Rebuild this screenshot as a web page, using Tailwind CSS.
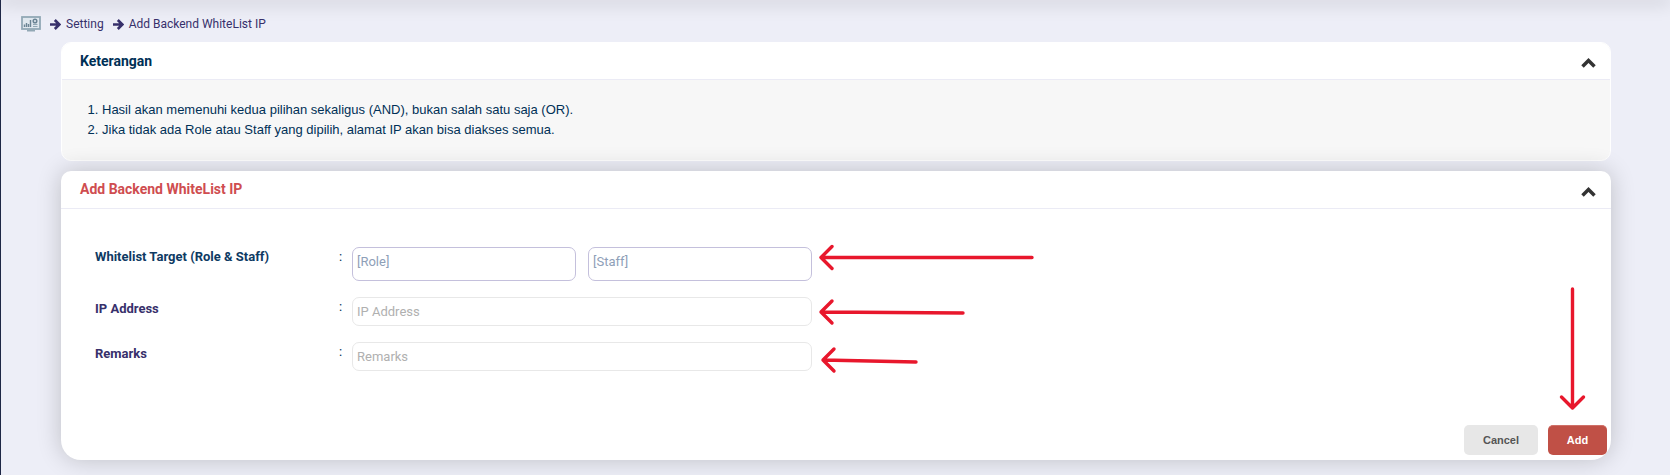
<!DOCTYPE html>
<html lang="id">
<head>
    <meta charset="UTF-8">
    <meta name="viewport" content="width=device-width, initial-scale=1.0">
    <title>Add Backend WhiteList IP</title>
    <script src="https://cdn.jsdelivr.net/npm/@tailwindcss/browser@4"></script>
</head>
<body class="min-h-screen bg-[#edeef7] border-l border-[#1e2746] text-[13px] text-[#003056] font-[Roboto,sans-serif] overflow-x-hidden">

    <div class="h-px -mt-px shadow-[0_0_18px_2px_rgba(0,0,0,0.25)]"></div>

    <!-- breadcrumb -->
    <nav class="flex items-center h-[42px] pl-5 pt-[6px] text-[12px] text-[#37306b]">
        <a href="#" aria-label="Dashboard">
            <svg class="w-5 h-4" viewBox="0 0 20 16" fill="none">
                <rect x="1" y="1" width="18" height="12" fill="#dfe7ee" stroke="#92a8b5" stroke-width="1.8"/>
                <path d="M6 13.500h8v2H6z" fill="#92a8b5"/>
                <path d="M3.500 11V8.500M5.500 11V7M7.500 11V8M9.500 11V4" stroke="#6b8494" stroke-width="1.400"/>
                <circle cx="14" cy="5" r="1.800" stroke="#6b8494" stroke-width="1.500"/>
                <path d="M12 8.500h4.500M12 10.500h4.500" stroke="#92a8b5"/>
            </svg>
        </a>
        <svg class="w-[11px] h-[11px] ml-[9px]" viewBox="0 0 11 11" fill="none" stroke="#37306b" stroke-width="2.600"><path d="M0 5.500h9M4.800 1l4.500 4.500L4.800 10"/></svg>
        <a href="#" class="ml-[5px]">Setting</a>
        <svg class="w-[11px] h-[11px] ml-[9px]" viewBox="0 0 11 11" fill="none" stroke="#37306b" stroke-width="2.600"><path d="M0 5.500h9M4.800 1l4.500 4.500L4.800 10"/></svg>
        <a href="#" class="ml-[5px]">Add Backend WhiteList IP</a>
    </nav>

    <main class="pl-[60px] pr-[59px]">
        <section class="bg-[#f7f7f7] border border-white rounded-[10px] overflow-hidden">
            <div class="flex items-center justify-between h-[37px] pl-[18px] pr-[14px] bg-white border-b border-[#ebebf5]">
                <h2 class="text-[14px] font-bold">Keterangan</h2>
                <button type="button" aria-label="Collapse" class="pt-1">
                    <svg class="w-[15px] h-[10px]" viewBox="0 0 15 10" fill="none" stroke="#333" stroke-width="3.500"><path d="M1.500 8.500l6-6 6 6"/></svg>
                </button>
            </div>
            <ol class="list-decimal pl-10 py-5 leading-5 font-['Liberation_Sans',sans-serif]">
                <li>Hasil akan memenuhi kedua pilihan sekaligus (AND), bukan salah satu saja (OR).</li>
                <li>Jika tidak ada Role atau Staff yang dipilih, alamat IP akan bisa diakses semua.</li>
            </ol>
        </section>

        <section class="mt-[10px] bg-white rounded-t-[10px] rounded-b-[20px] shadow-[0_0_24px_rgba(0,0,0,0.2)]">
            <div class="flex items-center justify-between h-[38px] pl-[19px] pr-[15px] border-b border-[#ebebf5]">
                <h2 class="text-[14px] font-bold text-[#cf4d50]">Add Backend WhiteList IP</h2>
                <button type="button" aria-label="Collapse" class="pt-1">
                    <svg class="w-[15px] h-[10px]" viewBox="0 0 15 10" fill="none" stroke="#333" stroke-width="3.500"><path d="M1.500 8.500l6-6 6 6"/></svg>
                </button>
            </div>

            <form>
                <div class="flex flex-col gap-4 pl-[34px] pt-[38px]">
                    <div class="flex">
                        <label for="role" class="w-[244px] font-bold leading-5 text-[#0e3a63]">Whitelist Target (Role &amp; Staff)</label>
                        <span class="w-[13px] leading-5">:</span>
                        <div class="relative flex gap-3 w-[460px]">
                            <input id="role" type="text" placeholder="[Role]" class="min-w-0 flex-1 h-[34px] px-1 pb-[5px] border border-[#c4c0dc] rounded-[7px] placeholder:text-[#8ea0b8]">
                            <input id="staff" type="text" placeholder="[Staff]" aria-label="Staff" class="min-w-0 flex-1 h-[34px] px-1 pb-[5px] border border-[#c4c0dc] rounded-[7px] placeholder:text-[#8ea0b8]">
                            <svg class="absolute left-full top-[-4px] ml-1.5 w-[220px] h-7" viewBox="0 0 220 28" fill="none" stroke="#e8172c" stroke-width="3.400" stroke-linecap="round" stroke-linejoin="round"><path d="M3 14.500h211M14 3.500L3 14.500l11 11"/></svg>
                        </div>
                    </div>
                    <div class="flex">
                        <label for="ip-address" class="w-[244px] pt-[2px] font-bold leading-5 text-[#37306b]">IP Address</label>
                        <span class="w-[13px] leading-5">:</span>
                        <div class="relative w-[460px]">
                            <input id="ip-address" type="text" placeholder="IP Address" class="w-full h-[29px] px-1 border border-[#e8e8e8] rounded-[7px] placeholder:text-[#b0b0b0]">
                            <svg class="absolute left-full top-px ml-1.5 w-[150px] h-7" viewBox="0 0 150 28" fill="none" stroke="#e8172c" stroke-width="3.400" stroke-linecap="round" stroke-linejoin="round"><path d="M3 14l142 1M14 3L3 14l11 11"/></svg>
                        </div>
                    </div>
                    <div class="flex">
                        <label for="remarks" class="w-[244px] pt-[2px] font-bold leading-5 text-[#37306b]">Remarks</label>
                        <span class="w-[13px] leading-5">:</span>
                        <div class="relative w-[460px]">
                            <input id="remarks" type="text" placeholder="Remarks" class="w-full h-[29px] px-1 border border-[#e8e8e8] rounded-[7px] placeholder:text-[#b0b0b0]">
                            <svg class="absolute left-full top-1 ml-2 w-[100px] h-7" viewBox="0 0 100 28" fill="none" stroke="#e8172c" stroke-width="3.400" stroke-linecap="round" stroke-linejoin="round"><path d="M3 14l93 2M14 3L3 14l11 11"/></svg>
                        </div>
                    </div>
                </div>

                <div class="relative flex justify-end gap-[10px] pt-[54px] pb-[5px] pr-1 text-[11px] font-bold font-['Liberation_Sans',sans-serif]">
                    <button type="button" class="w-[74px] h-[30px] rounded-[5px] bg-[#e7e7e7] text-[#555]">Cancel</button>
                    <button type="submit" class="w-[59px] h-[30px] rounded-[5px] bg-[#c05046] text-white border-t border-[#cf7068]">Add</button>
                    <svg class="absolute right-[25px] bottom-12 w-7 h-[126px]" viewBox="0 0 28 126" fill="none" stroke="#e8172c" stroke-width="3.400" stroke-linecap="round" stroke-linejoin="round"><path d="M14.500 3v119M3.500 111l11 11 11-11"/></svg>
                </div>
            </form>
        </section>
    </main>

</body>
</html>
